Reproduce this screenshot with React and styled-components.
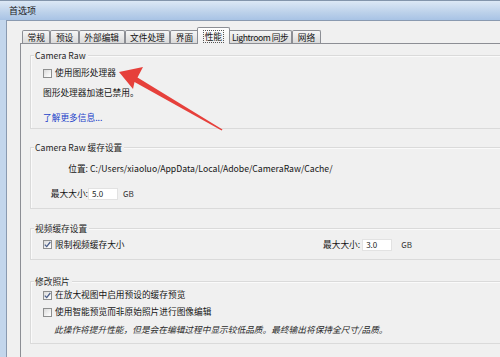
import React from 'react';
import styled, { createGlobalStyle } from 'styled-components';

const Global = createGlobalStyle`
  html, body { margin: 0; padding: 0; background: #f0f0f0; }
  body {
    font-family: "Noto Sans CJK SC", "Liberation Sans", sans-serif;
    font-size: 8.7px;
    line-height: 12px;
    color: #141414;
  }
  * { box-sizing: border-box; }
`;

const Window = styled.div`
  position: relative;
  width: 500px;
  height: 357px;
  overflow: hidden;
  display: flex;
  flex-direction: column;
  background: #c3d6ec;
  border-top: 1px solid #8395ab;
`;

const TitleBar = styled.div`
  height: 19px;
  flex: none;
  display: flex;
  align-items: center;
  padding-left: 9px;
  background: linear-gradient(#dce8f5, #bcd1ea 60%, #a8c3e5);
  font-size: 9px;
  color: #1a1a1a;
`;

const Frame = styled.div`
  flex: 1;
  display: flex;
  padding-left: 6px;
  min-height: 0;
`;

const Client = styled.div`
  flex: 1;
  min-width: 0;
  background: #f0f0f0;
  border-left: 1px solid #8a9ab0;
  border-top: 1px solid #8a9ab0;
  padding: 6px 0 0 13px;
  display: flex;
  flex-direction: column;
`;

const TabStrip = styled.div`
  display: flex;
  align-items: flex-end;
  height: 16px;
  padding-left: 2px;
  flex: none;
`;

const Tab = styled.div`
  position: relative;
  display: flex;
  align-items: center;
  justify-content: center;
  height: ${p => (p.$active ? 17 : 13)}px;
  margin: ${p => (p.$active ? '0 -2px -1px -2px' : '0')};
  z-index: ${p => (p.$active ? 2 : 1)};
  padding: 0 ${p => (p.$active ? 6 : p.$narrow ? 3 : 4.5)}px;
  letter-spacing: ${p => (p.$narrow ? '-0.45px' : '0')};
  border: 1px solid #8c8e94;
  border-bottom: none;
  border-radius: 2px 2px 0 0;
  background: ${p =>
    p.$active
      ? 'linear-gradient(#ffffff, #f4f4f4 60%, #f0f0f0)'
      : 'linear-gradient(#f6f6f6, #e8e8e8 50%, #dadada)'};
  white-space: nowrap;
  line-height: 11px;
`;

const Focus = styled.span`
  padding: 0 1px;
  outline: 1px dotted #555;
  outline-offset: 0;
  line-height: 11px;
`;

const Panel = styled.div`
  flex: 1;
  border-left: 1px solid #8c8e94;
  border-top: 1px solid #8c8e94;
  background: #f0f0f0;
  padding: 11px 0 0 9px;
  display: flex;
  flex-direction: column;
`;

const Group = styled.div`
  display: flex;
  flex-direction: column;
  align-items: flex-start;
  margin: ${p => p.$mt || 0}px -20px 0 0;
  padding: 0 0 ${p => p.$pb}px 12px;
  border: 1px solid #dadada;
  box-shadow: inset 1px 1px 0 #fafafa;
`;

const Legend = styled.div`
  margin: -6px 0 0 -9px;
  padding: 0 2px 0 1px;
  height: 12px;
  line-height: 12px;
  background: #f0f0f0;
  color: #262626;
`;

const Row = styled.div`
  display: flex;
  align-items: center;
  gap: 3px;
  height: ${p => p.$h || 12}px;
  margin-top: ${p => p.$gap || 0}px;
  white-space: nowrap;
`;

const Box = styled.span`
  flex: none;
  width: 9px;
  height: 9px;
  border: 1px solid #8e8f8f;
  background: linear-gradient(135deg, #dadada, #f6f6f6 70%, #ffffff);
  display: flex;
  align-items: center;
  justify-content: center;
`;

const LinkText = styled.span`
  color: #1b3fc9;
`;

const FieldRow = styled.div`
  display: grid;
  grid-template-columns: 45px auto auto;
  align-items: center;
  height: 12px;
  margin-top: ${p => p.$gap || 0}px;
  white-space: nowrap;
`;

const FieldLabel = styled.span`
  text-align: right;
`;

const PathText = styled.span`
  margin-left: 2px;
`;

const Input = styled.div`
  width: 30px;
  height: 12px;
  margin-left: ${p => p.$ml || 0}px;
  background: #ffffff;
  border: 1px solid #e2e2e2;
  padding-left: 3px;
  font-size: 8px;
  line-height: 10px;
  color: #222;
`;

const Unit = styled.span`
  margin-left: ${p => p.$ml}px;
  font-size: 8px;
  color: #333;
`;

const VideoRow = styled.div`
  display: grid;
  grid-template-columns: 280px auto;
  align-items: center;
  height: 15px;
  margin-top: 2px;
  white-space: nowrap;
`;

const Inline = styled.div`
  display: flex;
  align-items: center;
`;

const Note = styled.div`
  margin: 6px 0 0 11px;
  height: 12px;
  font-style: italic;
  color: #2a2a2a;
  white-space: nowrap;
`;

const Overlay = styled.svg`
  position: absolute;
  left: 0;
  top: 0;
  pointer-events: none;
`;

function Check({ checked }) {
  return (
    <Box>
      {checked && (
        <svg width="7" height="7" viewBox="0 0 7 7">
          <path d="M0.8 3.6 L2.7 5.6 L6.3 1" fill="none" stroke="#4b5f8a" strokeWidth="1.3" />
        </svg>
      )}
    </Box>
  );
}

const tabs = ['常规', '预设', '外部编辑', '文件处理', '界面', '性能', 'Lightroom 同步', '网络'];

export default function App() {
  return (
    <>
      <Global />
      <Window>
        <TitleBar>首选项</TitleBar>
        <Frame>
          <Client>
            <TabStrip>
              {tabs.map(t =>
                t === '性能' ? (
                  <Tab key={t} $active>
                    <Focus>{t}</Focus>
                  </Tab>
                ) : (
                  <Tab key={t} $narrow={t.startsWith('Light')}>{t}</Tab>
                )
              )}
            </TabStrip>
            <Panel>
              <Group $pb={4}>
                <Legend>Camera Raw</Legend>
                <Row $gap={5}>
                  <Check />
                  <span>使用图形处理器</span>
                </Row>
                <Row $gap={8}>图形处理器加速已禁用。</Row>
                <Row $gap={13}>
                  <LinkText>了解更多信息...</LinkText>
                </Row>
              </Group>

              <Group $mt={18} $pb={8}>
                <Legend>Camera Raw 缓存设置</Legend>
                <FieldRow $gap={9}>
                  <FieldLabel>位置:</FieldLabel>
                  <PathText>C:/Users/xiaoluo/AppData/Local/Adobe/CameraRaw/Cache/</PathText>
                </FieldRow>
                <FieldRow $gap={13}>
                  <FieldLabel>最大大小:</FieldLabel>
                  <Input>5.0</Input>
                  <Unit $ml={5}>GB</Unit>
                </FieldRow>
              </Group>

              <Group $mt={19} $pb={7}>
                <Legend>视频缓存设置</Legend>
                <VideoRow>
                  <Row>
                    <Check checked />
                    <span>限制视频缓存大小</span>
                  </Row>
                  <Inline>
                    <span>最大大小:</span>
                    <Input $ml={2}>3.0</Input>
                    <Unit $ml={9}>GB</Unit>
                  </Inline>
                </VideoRow>
              </Group>

              <Group $mt={21} $pb={7}>
                <Legend>修改照片</Legend>
                <Row $gap={1}>
                  <Check checked />
                  <span>在放大视图中启用预设的缓存预览</span>
                </Row>
                <Row $gap={5}>
                  <Check />
                  <span>使用智能预览而非原始照片进行图像编辑</span>
                </Row>
                <Note>此操作将提升性能，但是会在编辑过程中显示较低品质。最终输出将保持全尺寸/品质。</Note>
              </Group>
            </Panel>
          </Client>
        </Frame>
        <Overlay width="500" height="357" viewBox="0 0 500 357">
          <polygon
            points="119,71 143,66 137.5,76.5 222.5,128.6 221.6,129.4 134.5,81 133,88"
            fill="#e5312b"
            opacity="0.92"
          />
        </Overlay>
      </Window>
    </>
  );
}
